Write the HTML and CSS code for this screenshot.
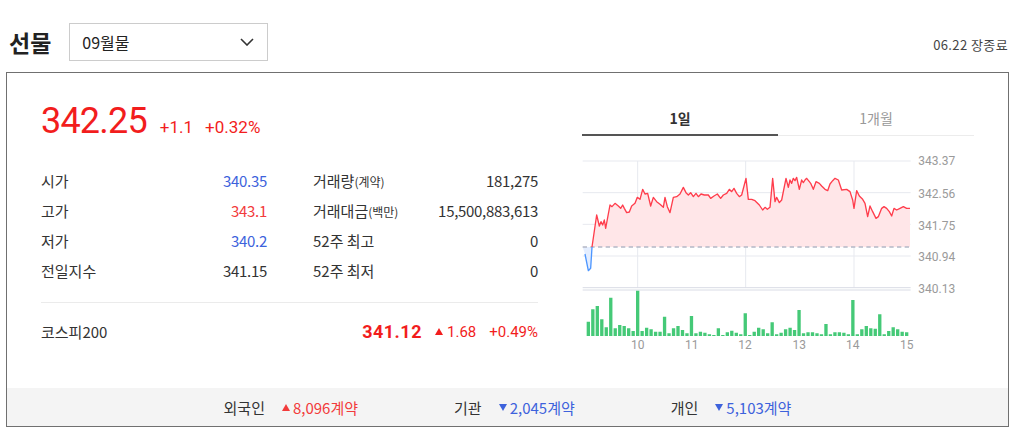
FILE: index.html
```html
<!DOCTYPE html>
<html>
<head>
    <meta charset="utf-8">
    <title>선물</title>
    <link rel="stylesheet" href="styles.css">
</head>
<body>
    <header class="top">
        <h2 class="title">선물</h2>
        <div class="select">
            <span>09월물</span>
            <svg class="chev" width="14" height="8" viewBox="0 0 14 8"><path d="M1 1l6 6 6-6" fill="none" stroke="#333" stroke-width="1.6"/></svg>
        </div>
        <span class="status">06.22 장종료</span>
    </header>

    <div class="panel">
        <div class="panel-body">
            <div class="summary">
                <div class="price-row">
                    <strong class="price">342.25</strong>
                    <span class="chg">+1.1</span>
                    <span class="chg">+0.32%</span>
                </div>

                <div class="stats">
                    <div class="stat-col">
                        <div class="stat"><span>시가</span><span class="num down">340.35</span></div>
                        <div class="stat"><span>고가</span><span class="num up">343.1</span></div>
                        <div class="stat"><span>저가</span><span class="num down">340.2</span></div>
                        <div class="stat"><span>전일지수</span><span class="num">341.15</span></div>
                    </div>
                    <div class="stat-col">
                        <div class="stat"><span>거래량<small>(계약)</small></span><span class="num">181,275</span></div>
                        <div class="stat"><span>거래대금<small>(백만)</small></span><span class="num">15,500,883,613</span></div>
                        <div class="stat"><span>52주 최고</span><span class="num">0</span></div>
                        <div class="stat"><span>52주 최저</span><span class="num">0</span></div>
                    </div>
                </div>

                <div class="index-row">
                    <span>코스피200</span>
                    <div class="index-vals">
                        <strong class="index-price">341.12</strong>
                        <span class="index-chg"><i class="tri-up"></i>1.68</span>
                        <span class="index-chg">+0.49%</span>
                    </div>
                </div>
            </div>

            <div class="chart">
                <div class="tabs">
                    <span class="tab active">1일</span>
                    <span class="tab">1개월</span>
                </div>
                <svg class="plot" width="396" height="205" viewBox="24 150 1188 615">
                    <!-- grid -->
                    <g stroke="#e7e9ef" stroke-width="3">
                        <path d="M38 183H1022M38 278H1022M38 373H1022M38 468H1022"/>
                        <path d="M203 183V563M527 183V563M852 183V563"/>
                    </g>
                    <path d="M38 563H1022M38 570H1022" stroke="#d9dce5" stroke-width="3"/>

                    <!-- price -->
                    <path fill="#ffe6e8" d="M66 441L80 345L88 378L93 365L98 375L103 360L107 385L120 315L126 320L135 310L145 318L152 325L158 315L163 325L170 338L178 336L185 318L195 310L202 292L210 298L218 268L225 282L233 280L242 318L250 292L260 305L270 313L280 322L285 292L292 320L300 338L310 292L320 290L330 282L340 262L348 278L355 285L362 278L370 290L378 280L385 290L393 282L403 285L415 285L422 295L432 288L442 282L452 295L460 285L470 280L478 268L485 275L492 265L500 280L508 290L515 285L528 235L535 298L545 298L555 302L568 315L578 330L585 322L592 328L600 322L608 235L615 305L620 292L628 308L635 300L648 235L655 262L660 240L665 250L670 235L675 242L680 232L688 268L695 240L700 248L705 240L710 235L718 245L722 250L730 268L738 245L748 250L755 258L765 268L773 272L780 252L788 242L795 235L805 240L815 270L830 268L840 275L848 300L852 325L860 272L868 288L878 298L885 310L893 350L900 318L908 335L918 355L925 350L935 325L942 320L950 325L958 335L965 348L972 325L980 330L990 325L1000 320L1010 325L1020 325L1020 441Z"/>
                    <path fill="#e4eeff" d="M38 441L45 462L55 512L62 505L66 441Z"/>
                    <path d="M38 441H1022" stroke="#b4b8c6" stroke-width="5" stroke-dasharray="13 10"/>
                    <path fill="none" stroke="#ff3d4c" stroke-width="4" stroke-linejoin="round" d="M66 441L80 345L88 378L93 365L98 375L103 360L107 385L120 315L126 320L135 310L145 318L152 325L158 315L163 325L170 338L178 336L185 318L195 310L202 292L210 298L218 268L225 282L233 280L242 318L250 292L260 305L270 313L280 322L285 292L292 320L300 338L310 292L320 290L330 282L340 262L348 278L355 285L362 278L370 290L378 280L385 290L393 282L403 285L415 285L422 295L432 288L442 282L452 295L460 285L470 280L478 268L485 275L492 265L500 280L508 290L515 285L528 235L535 298L545 298L555 302L568 315L578 330L585 322L592 328L600 322L608 235L615 305L620 292L628 308L635 300L648 235L655 262L660 240L665 250L670 235L675 242L680 232L688 268L695 240L700 248L705 240L710 235L718 245L722 250L730 268L738 245L748 250L755 258L765 268L773 272L780 252L788 242L795 235L805 240L815 270L830 268L840 275L848 300L852 325L860 272L868 288L878 298L885 310L893 350L900 318L908 335L918 355L925 350L935 325L942 320L950 325L958 335L965 348L972 325L980 330L990 325L1000 320L1010 325L1020 325"/>
                    <path fill="none" stroke="#4d96ff" stroke-width="4" stroke-linejoin="round" d="M45 462L55 512L62 505L66 441"/>

                    <!-- volume -->
                    <path fill="#45c977" d="M50 665h10V708h-10zM63.5 628h10V708h-10zM76.9 618h10V708h-10zM90.4 658h10V708h-10zM103.8 682h10V708h-10zM117.3 593h10V708h-10zM130.7 685h10V708h-10zM144.2 675h10V708h-10zM157.6 678h10V708h-10zM171.1 685h10V708h-10zM184.5 693h10V708h-10zM198 572h10V708h-10zM211.4 693h10V708h-10zM224.9 683h10V708h-10zM238.3 688h10V708h-10zM251.8 695h10V708h-10zM265.2 695h10V708h-10zM278.7 650h10V708h-10zM292.1 700h10V708h-10zM305.6 685h10V708h-10zM319 678h10V708h-10zM332.5 690h10V708h-10zM345.9 700h10V708h-10zM359.4 648h10V708h-10zM372.8 700h10V708h-10zM386.3 695h10V708h-10zM399.7 698h10V708h-10zM413.2 703h10V708h-10zM426.6 705h10V708h-10zM440.1 685h10V708h-10zM453.5 705h10V708h-10zM467 697h10V708h-10zM480.4 692h10V708h-10zM493.9 698h10V708h-10zM507.3 703h10V708h-10zM520.8 640h10V708h-10zM534.2 705h10V708h-10zM547.7 695h10V708h-10zM561.1 683h10V708h-10zM574.6 688h10V708h-10zM588 700h10V708h-10zM601.5 667h10V708h-10zM614.9 703h10V708h-10zM628.4 698h10V708h-10zM641.8 688h10V708h-10zM655.3 683h10V708h-10zM668.7 690h10V708h-10zM682.2 630h10V708h-10zM695.6 700h10V708h-10zM709.1 697h10V708h-10zM722.5 697h10V708h-10zM736 700h10V708h-10zM749.4 703h10V708h-10zM762.9 672h10V708h-10zM776.3 703h10V708h-10zM789.8 697h10V708h-10zM803.2 697h10V708h-10zM816.7 698h10V708h-10zM830.1 703h10V708h-10zM843.6 600h10V708h-10zM857 703h10V708h-10zM870.5 688h10V708h-10zM883.9 678h10V708h-10zM897.4 685h10V708h-10zM910.8 686h10V708h-10zM924.3 643h10V708h-10zM937.7 703h10V708h-10zM951.2 693h10V708h-10zM964.6 682h10V708h-10zM978.1 688h10V708h-10zM991.5 695h10V708h-10zM1005 697h10V708h-10z"/>

                    <!-- axes -->
                    <g class="axis">
                        <text x="1045" y="196">343.37</text>
                        <text x="1045" y="294">342.56</text>
                        <text x="1045" y="389">341.75</text>
                        <text x="1045" y="483">340.94</text>
                        <text x="1045" y="578">340.13</text>
                    </g>
                    <g class="axis" text-anchor="middle">
                        <text x="203" y="746">10</text>
                        <text x="365" y="746">11</text>
                        <text x="525" y="746">12</text>
                        <text x="688" y="746">13</text>
                        <text x="848" y="746">14</text>
                        <text x="1010" y="746">15</text>
                    </g>
                </svg>
            </div>
        </div>

        <div class="investors">
            <div class="investor"><span>외국인</span><span class="inv-val up"><i class="tri-up"></i>8,096계약</span></div>
            <div class="investor"><span>기관</span><span class="inv-val down"><i class="tri-down"></i>2,045계약</span></div>
            <div class="investor"><span>개인</span><span class="inv-val down"><i class="tri-down"></i>5,103계약</span></div>
        </div>
    </div>
</body>
</html>
```

FILE: styles.css
```css
* {
    box-sizing: border-box;
}
body {
    margin: 0;
    font-family: "Noto Sans CJK KR", sans-serif;
    color: #333;
    background: #fff;
}
.top {
    display: flex;
    align-items: center;
    height: 72px;
    padding: 12px 16px 0 9px;
}
.title {
    margin: 0;
    font-size: 23px;
    font-weight: 700;
    line-height: 1;
    color: #222;
}
.select {
    display: flex;
    align-items: center;
    justify-content: space-between;
    width: 199px;
    height: 38px;
    margin-left: 18px;
    padding: 0 13px 0 12px;
    border: 1px solid #ccc;
    font-size: 16px;
    color: #222;
}
.status {
    margin-left: auto;
    margin-top: 4px;
    font-size: 13px;
    letter-spacing: 0.4px;
    color: #444;
}
.panel {
    display: flex;
    flex-direction: column;
    width: 1003px;
    height: 355px;
    margin-left: 6px;
    border: 1px solid #707070;
}
.panel-body {
    flex: 1;
    display: flex;
}
.summary {
    width: 497px;
    margin-left: 34px;
    padding-top: 28px;
}
.price-row {
    display: flex;
    align-items: baseline;
    height: 40px;
    color: #f21d1d;
}
.price {
    font-family: Roboto, sans-serif;
    font-size: 36px;
    font-weight: 400;
    line-height: 40px;
    letter-spacing: -0.8px;
}
.chg {
    margin-left: 13px;
    font-family: Roboto, sans-serif;
    font-size: 17px;
}
.chg + .chg {
    margin-left: 12px;
}
.stats {
    display: grid;
    grid-template-columns: 226px 225px;
    column-gap: 46px;
    margin-top: 24px;
}
.stat {
    display: flex;
    align-items: center;
    justify-content: space-between;
    height: 30px;
    font-size: 15px;
}
.stat small {
    font-size: 12px;
}
.num {
    letter-spacing: -0.3px;
}
.up {
    color: #f23b3b;
}
.down {
    color: #3d62dc;
}
.index-row {
    display: flex;
    align-items: center;
    justify-content: space-between;
    height: 59px;
    margin-top: 17px;
    padding-bottom: 1px;
    border-top: 1px solid #ebebeb;
    font-size: 15px;
}
.index-vals {
    display: flex;
    align-items: center;
    color: #f21d1d;
}
.index-price {
    font-family: Roboto, sans-serif;
    font-size: 18px;
    font-weight: 700;
    letter-spacing: 0.5px;
}
.index-chg {
    display: flex;
    align-items: center;
    margin-left: 13px;
    font-family: Roboto, sans-serif;
    font-size: 15px;
}
.tri-up,
.tri-down {
    display: inline-block;
    width: 0;
    height: 0;
    margin-right: 4px;
    border-left: 4px solid transparent;
    border-right: 4px solid transparent;
}
.tri-up {
    border-bottom: 7px solid currentColor;
}
.tri-down {
    border-top: 7px solid currentColor;
}
.chart {
    width: 396px;
    margin-left: 40px;
}
.tabs {
    display: flex;
    margin: 31px 0 0 4px;
    border-bottom: 1px solid #ececec;
}
.tab {
    flex: 1;
    height: 31px;
    text-align: center;
    font-size: 14px;
    line-height: 29px;
    color: #999;
}
.tab.active {
    margin-bottom: -1px;
    height: 32px;
    border-bottom: 2px solid #555;
    font-weight: 700;
    color: #333;
}
.plot {
    display: block;
    margin-top: 14px;
}
.axis {
    font-family: Roboto, "Liberation Sans", sans-serif;
    font-size: 36px;
    fill: #9a9a9a;
}
.investors {
    display: flex;
    justify-content: center;
    align-items: center;
    gap: 96px;
    height: 38px;
    background: #f4f4f4;
    font-size: 15px;
}
.investor {
    display: flex;
    align-items: center;
    gap: 17px;
}
.inv-val {
    display: flex;
    align-items: center;
}
.inv-val .tri-up,
.inv-val .tri-down {
    margin-right: 3px;
}
```
